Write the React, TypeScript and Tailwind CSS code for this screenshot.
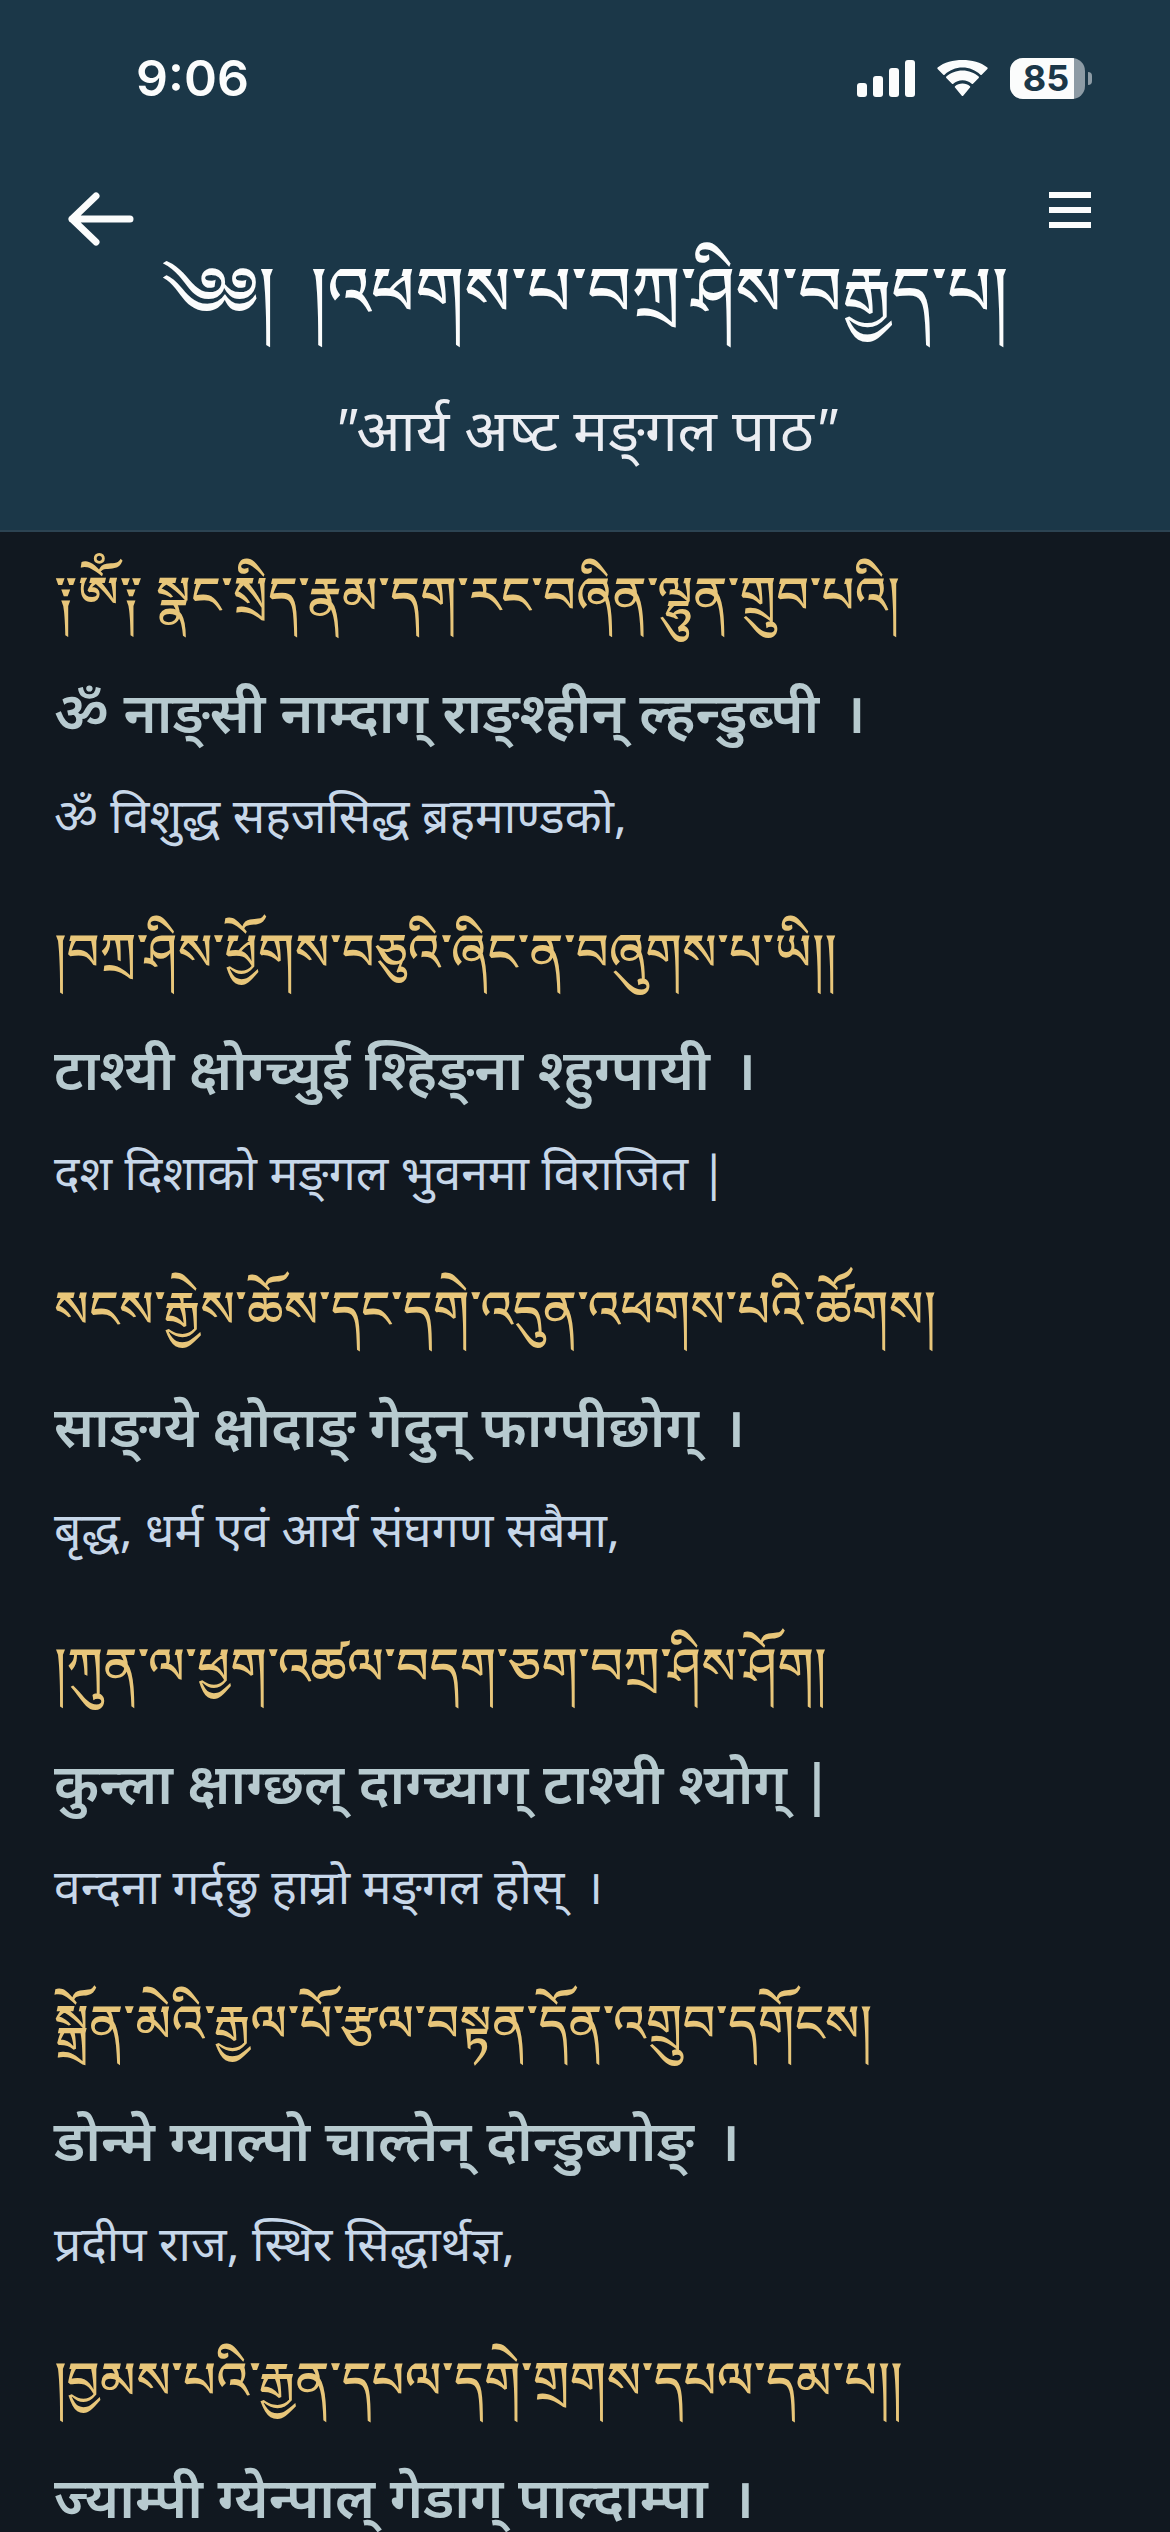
import { useState } from 'react'

// \u200c and \u200d keep the half letters from stacking, \u2009 widens the gap before a danda
const title = '༄༅།\u00a0 །འཕགས་པ་བཀྲ་ཤིས་བརྒྱད་པ།'
const subtitle = 'आर्य अष्\u200dट मङ्\u200cगल पाठ'

const verses = [
  {
    tibetan: '༑ཨོཾ༑ སྣང་སྲིད་རྣམ་དག་རང་བཞིན་ལྷུན་གྲུབ་པའི།',
    reading: 'ॐ नाङ्सी नाम्दाग् राङ्श्हीन् ल्हन्डुब्पी\u2009 ।',
    meaning: 'ॐ विशुद्ध सहजसिद्ध ब्रहमाण्डको,'
  },
  {
    tibetan: '།བཀྲ་ཤིས་ཕྱོགས་བཅུའི་ཞིང་ན་བཞུགས་པ་ཡི།།',
    reading: 'टाश्यी क्षोग्च्युई श्हिङ्ना श्हुग्पायी\u2009 ।',
    meaning: 'दश दिशाको मङ्\u200cगल भुवनमा विराजित |'
  },
  {
    tibetan: 'སངས་རྒྱེས་ཆོས་དང་དགེ་འདུན་འཕགས་པའི་ཚོགས།',
    reading: 'साङ्ग्ये क्षोदाङ् गेदुन् फाग्पीछोग्\u2009 ।',
    meaning: 'बृद्ध, धर्म एवं आर्य संघगण सबैमा,'
  },
  {
    tibetan: '།ཀུན་ལ་ཕྱག་འཚལ་བདག་ཅག་བཀྲ་ཤིས་ཤོག།',
    reading: 'कुन्ला क्षाग्छल् दाग्च्याग् टाश्यी श्योग् |',
    meaning: 'वन्दना गर्दछु हाम्रो मङ्\u200cगल होस्\u2009 ।'
  },
  {
    tibetan: 'སྒྲོན་མེའི་རྒྱལ་པོ་རྩལ་བསྟན་དོན་འགྲུབ་དགོངས།',
    reading: 'डोन्मे ग्याल्पो चाल्तेन् दोन्डुब्गोङ्\u2009 ।',
    meaning: 'प्रदीप राज, स्थिर सिद्धार्थज्ञ,'
  },
  {
    tibetan: '།བྱམས་པའི་རྒྱན་དཔལ་དགེ་གྲགས་དཔལ་དམ་པ།།',
    reading: 'ज्याम्पी ग्येन्पाल् गेडाग् पाल्दाम्पा\u2009 ।',
    meaning: ''
  }
]

function StatusBar() {
  return (
    <div className="flex items-center justify-between h-[156px] pl-[136px] pr-[78px] text-[#fbfcfc]">
      <span className="font-['Inter',sans-serif] font-semibold text-[50px] leading-none">9:06</span>
      <div className="flex items-center">
        <svg width="58" height="38" viewBox="0 0 58 38" fill="currentColor" aria-hidden="true">
          <rect x="0" y="24" width="10" height="14" rx="3" />
          <rect x="16" y="17" width="10" height="21" rx="3" />
          <rect x="32" y="9" width="10" height="29" rx="3" />
          <rect x="48" y="1" width="10" height="37" rx="3" />
        </svg>
        <svg className="ml-[22px]" width="51" height="38" viewBox="0 0 51 38" fill="currentColor" aria-hidden="true">
          <path d="M25.500 8.600c6.900 0 13.200 2.700 17.900 7.100.4.300.9.300 1.300 0l5.700-5.700c.4-.4.4-1 0-1.400C43.700 2.900 34.900 1 25.500 1S7.300 2.900.6 8.600c-.4.400-.4 1 0 1.400l5.700 5.700c.4.300.9.300 1.300 0 4.700-4.400 11-7.100 17.900-7.100z" />
          <path d="M25.500 21.200c3.500 0 6.700 1.300 9.200 3.500.4.300.9.300 1.300 0l5.700-5.700c.4-.4.4-1 0-1.400-4.300-3.900-10-6.200-16.200-6.200S13.600 13.700 9.300 17.600c-.4.400-.4 1 0 1.400l5.700 5.700c.4.300.9.300 1.300 0 2.500-2.200 5.700-3.500 9.200-3.500z" />
          <path d="M33 28.600c.4-.4.4-1 0-1.400-2-1.700-4.600-2.600-7.500-2.600s-5.500.9-7.500 2.600c-.4.400-.4 1 0 1.400l6.800 8.200c.4.400 1 .4 1.400 0z" />
        </svg>
        <div className="ml-[22px] flex items-center">
          <div className="flex h-[41px] w-[75px] overflow-hidden rounded-[13px] bg-[#8d9ba5]">
            <span className="flex w-16 items-center justify-center bg-[#fbfcfc] pl-3 pr-1 font-['Inter',sans-serif] text-[36px] leading-none font-bold text-[#1b3748]">
              85
            </span>
          </div>
          <div className="ml-[3px] h-[13px] w-1 rounded-r-full bg-[#8d9ba5]"></div>
        </div>
      </div>
    </div>
  )
}

export default function App() {
  const [menuOpen, setMenuOpen] = useState(false)

  return (
    <div className="flex h-screen flex-col overflow-hidden bg-[#111820] font-['Noto_Sans','Noto_Sans_Devanagari','Noto_Serif_Tibetan',sans-serif]">
      <header className="shrink-0 border-b-2 border-[#2c4352] bg-[#1b3748] pb-[54px] text-[#fbfcfc]">
        <StatusBar />
        <div className="flex h-[68px] items-start justify-between pl-[68px] pr-[79px] pt-9">
          <button type="button" aria-label="Back">
            <svg width="66" height="54" viewBox="0 0 66 54" fill="none" stroke="currentColor" strokeWidth="7" strokeLinecap="round" strokeLinejoin="round">
              <path d="M28 4L4 27l24 23M4 27h58" />
            </svg>
          </button>
          <button type="button" aria-label="Menu" aria-expanded={menuOpen} onClick={() => setMenuOpen(!menuOpen)}>
            <svg width="42" height="36" viewBox="0 0 42 36" fill="currentColor">
              <rect x="0" y="0" width="42" height="6" />
              <rect x="0" y="15" width="42" height="6" />
              <rect x="0" y="30" width="42" height="6" />
            </svg>
          </button>
        </div>
        <h1 className="whitespace-nowrap text-center text-[68px] leading-[130px] font-medium">{title}</h1>
        <p className="mt-7 text-center text-[58px] leading-[94px] text-[#ebedf2]">
          <i>"</i>{subtitle}<i>"</i>
        </p>
      </header>

      <main className="grow overflow-hidden px-[54px]">
        {verses.map((verse) => (
          <section key={verse.tibetan} className="h-[357px] whitespace-nowrap">
            <p className="text-[51px] leading-[122px] font-medium text-[#e8c67a]">{verse.tibetan}</p>
            <p className="text-[56px] leading-[114px] font-semibold text-[#b7cacf]">{verse.reading}</p>
            <p className="text-[48px] leading-[94px] text-[#c7d7e9]">{verse.meaning}</p>
          </section>
        ))}
      </main>
    </div>
  )
}
